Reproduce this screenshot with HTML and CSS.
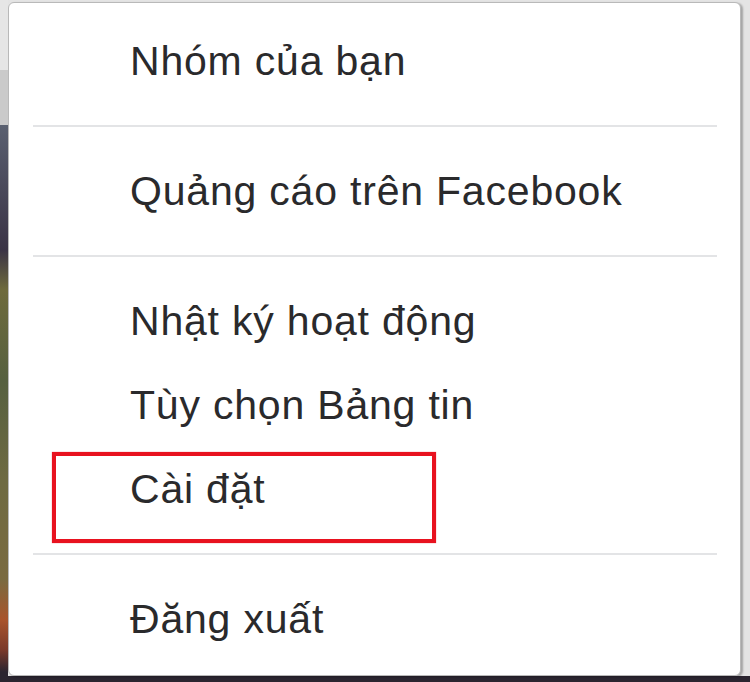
FILE: index.html
```html
<!DOCTYPE html>
<html lang="vi">
<head>
<meta charset="utf-8">
<title>Menu</title>
<link rel="stylesheet" href="styles.css">
</head>
<body>
<div class="page">
  <div class="menu">
    <div class="item">Nhóm của bạn</div>
    <div class="sep"></div>
    <div class="item">Quảng cáo trên Facebook</div>
    <div class="sep"></div>
    <div class="item">Nhật ký hoạt động</div>
    <div class="item">Tùy chọn Bảng tin</div>
    <div class="item item-marked">Cài đặt<span class="mark"></span></div>
    <div class="sep"></div>
    <div class="item">Đăng xuất</div>
  </div>
</div>
</body>
</html>
```
FILE: styles.css
```css
html, body {
  margin: 0;
  padding: 0;
}
body {
  width: 750px;
  height: 682px;
  overflow: hidden;
}
.page {
  box-sizing: border-box;
  width: 750px;
  height: 682px;
  padding: 2px 9px 6px 8px;
  background:
    linear-gradient(#2b2530, #2b2530) left bottom / 100% 6px no-repeat,
    linear-gradient(to bottom,
      #e6e6e6 0, #e6e6e6 70px,
      #cacaca 70px, #cacaca 125px,
      #5a6070 125px, #3a3345 250px,
      #6e6a3c 290px, #566040 380px,
      #6e6a42 480px, #7a6a40 580px,
      #a9542c 620px, #7a3a2a 650px, #2b2530 672px) left top / 8px 100% no-repeat,
    #e4e4e4;
}
.menu {
  box-sizing: border-box;
  height: 674px;
  background: #fff;
  border: 1px solid #b9b9b9;
  border-radius: 6px;
  box-shadow: 2px 1px 2px rgba(0, 0, 0, 0.28);
  padding: 16px 0 0 0;
  font-family: "Liberation Sans", Arial, sans-serif;
  font-size: 41px;
  letter-spacing: 0.8px;
  color: #2a2a2c;
}
.item {
  position: relative;
  height: 84px;
  line-height: 84px;
  padding-left: 121px;
  white-space: nowrap;
}
.sep {
  height: 2px;
  margin: 22px 23px 22px 24px;
  background: #e3e4e6;
}
.mark {
  position: absolute;
  left: 43px;
  top: 5px;
  width: 384px;
  height: 91px;
  box-sizing: border-box;
  border: 4px solid #e8121f;
  box-shadow: 0 0 1px rgba(232, 18, 31, 0.6);
}
```
